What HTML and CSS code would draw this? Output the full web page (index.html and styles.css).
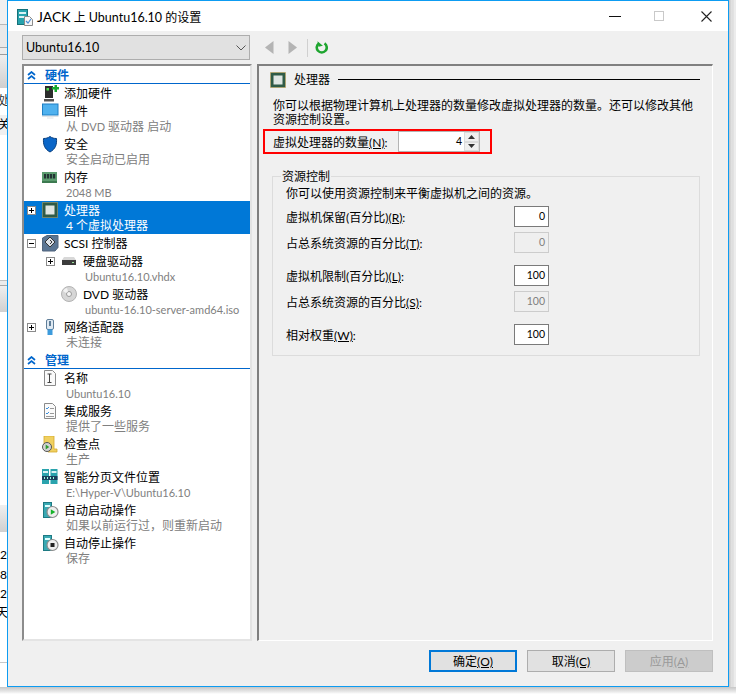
FILE: index.html
```html
<!DOCTYPE html>
<html lang="zh-CN">
<head>
<meta charset="utf-8">
<title>JACK 上 Ubuntu16.10 的设置</title>
<link rel="stylesheet" href="styles.css">
</head>
<body>
<div class="desktop">
  <div class="behind-left"></div>
  <div class="behind-right"></div>
  <div class="behind-bottom"></div>
  <span class="peek peek-1">处</span>
  <span class="peek peek-2">关</span>
  <span class="peek peek-3">20</span>
  <span class="peek peek-4">8</span>
  <span class="peek peek-5">2</span>
  <span class="peek peek-6">天</span>

  <div class="window">
    <header class="titlebar">
      <svg class="title-icon" width="16" height="17" viewBox="0 0 16 17"><rect x="0.500" y="0.500" width="10" height="15" fill="#27a3ad" stroke="#14717a"/><rect x="2" y="3" width="7" height="2" fill="#d8f2f4"/><rect x="2" y="7" width="7" height="2" fill="#d8f2f4"/><path d="M7.500 7.500h5l3 3v6h-8z" fill="#f6f6f6" stroke="#8b8b8b"/><path d="M9 12l2 2 3-4" fill="none" stroke="#4a90d9" stroke-width="1.200"/></svg>
      <span class="title-text"><span class="title-latin">JACK</span> 上 <span class="title-ver">Ubuntu16.10</span> 的设置</span>
      <div class="win-controls">
        <span class="win-min"></span>
        <span class="win-max"></span>
        <svg class="win-close" width="11" height="11" viewBox="0 0 11 11"><path d="M0.500 0.500l10 10M10.500 0.500l-10 10" stroke="#222" stroke-width="1.100"/></svg>
      </div>
    </header>

    <div class="content">
      <div class="top-row">
        <div class="combo">
          <span>Ubuntu16.10</span>
          <svg width="10" height="6" viewBox="0 0 10 6"><path d="M0.500 0.500L5 5l4.500-4.500" fill="none" stroke="#555" stroke-width="1"/></svg>
        </div>
        <div class="toolbar">
          <svg class="nav-arrow" width="9" height="13" viewBox="0 0 9 13"><path d="M8.500 0v13L0 6.500z" fill="#b4b4b4"/></svg>
          <svg class="nav-arrow" width="9" height="13" viewBox="0 0 9 13"><path d="M0.500 0v13L9 6.500z" fill="#b4b4b4"/></svg>
          <span class="tool-sep"></span>
          <svg width="13" height="13" viewBox="0 0 13 13"><path d="M4 2.300A5 5 0 1 0 9.500 2.300" fill="none" stroke="#1ea52f" stroke-width="2.600"/><path d="M3 0v5.500h4.500z" fill="#1ea52f" transform="rotate(-12 4 3)"/></svg>
        </div>
      </div>

      <div class="main-row">
        <nav class="tree">
          <div class="section"><svg class="chev" width="9" height="9" viewBox="0 0 9 9"><path d="M1 4l3.500-3L8 4M1 8l3.500-3L8 8" fill="none" stroke="#0066cc" stroke-width="1.700"/></svg><span>硬件</span></div>

          <div class="item single">
            <span class="exp"></span>
            <svg class="ico" width="17" height="17" viewBox="0 0 17 17"><path d="M3 1h8v12H3z" fill="#2c2c2c"/><path d="M2 14h10v2.500H2z" fill="#555"/><rect x="4.500" y="3" width="2.500" height="2.500" fill="#4ee04e"/><path d="M10 2h2.500V0h2.500v2h2v2.500h-2v2.500h-2.500V4.500H10z" fill="#17a92e"/></svg>
            <div class="lbl"><div class="main">添加硬件</div></div>
          </div>
          <div class="item">
            <span class="exp"></span>
            <svg class="ico" width="17" height="17" viewBox="0 0 17 17"><rect x="0.500" y="1" width="15.500" height="11" fill="#4fb1ee" stroke="#1f7fc4"/><path d="M0 13h16.500v1H0z" fill="#dfe3e6"/><path d="M5 14.500h6.500v1H5z" fill="#dfe3e6"/></svg>
            <div class="lbl"><div class="main">固件</div><div class="sub">从 <span class="latin">DVD</span> 驱动器 启动</div></div>
          </div>
          <div class="item">
            <span class="exp"></span>
            <svg class="ico" width="17" height="17" viewBox="0 0 17 17"><path d="M8 0.500c2 1.500 4 2 6.500 2 .5 6-1 10.500-6.500 13.500C2.500 13 1 8.500 1.500 2.500 4 2.500 6 2 8 0.500z" fill="#0a66c8" stroke="#073f7f"/></svg>
            <div class="lbl"><div class="main">安全</div><div class="sub">安全启动已启用</div></div>
          </div>
          <div class="item">
            <span class="exp"></span>
            <svg class="ico" width="17" height="17" viewBox="0 0 17 17"><rect x="0" y="3" width="15" height="9" fill="#5b9b6e"/><rect x="2" y="5" width="2.200" height="4.500" fill="#233"/><rect x="5" y="5" width="2.200" height="4.500" fill="#233"/><rect x="8" y="5" width="2.200" height="4.500" fill="#233"/><rect x="11" y="5" width="2.200" height="4.500" fill="#233"/><path d="M0 12h15v2H0z" fill="#3c7a50"/></svg>
            <div class="lbl"><div class="main">内存</div><div class="sub"><span class="latin">2048 MB</span></div></div>
          </div>
          <div class="item selected">
            <span class="exp"><span class="box plus"></span></span>
            <svg class="ico" width="17" height="17" viewBox="0 0 17 17"><rect x="0.500" y="0.500" width="15" height="15" fill="#2f5b46" stroke="#c8a24a" stroke-dasharray="1 1"/><rect x="3.500" y="3.500" width="9" height="9" fill="#dfe6e2"/></svg>
            <div class="lbl"><div class="main">处理器</div><div class="sub">4 个虚拟处理器</div></div>
          </div>
          <div class="item single">
            <span class="exp"><span class="box minus"></span></span>
            <svg class="ico" width="17" height="17" viewBox="0 0 17 17"><path d="M0.500 3L5 0.500h11v12l-3 3.500H0.500z" fill="#5a7593" stroke="#51657c"/><path d="M8 2l5 5-5 5-5-5z" fill="#dde3ea" stroke="#333"/><path d="M8 5l2 2-2 2" fill="none" stroke="#333"/></svg>
            <div class="lbl"><div class="main">SCSI 控制器</div></div>
          </div>
          <div class="item nested">
            <span class="exp"><span class="box plus"></span></span>
            <svg class="ico" width="17" height="17" viewBox="0 0 17 17"><path d="M1 7l2-3h10l2 3z" fill="#d8d8d8"/><rect x="1" y="7" width="14" height="5" fill="#3c3c3c"/><rect x="11" y="9" width="2" height="1" fill="#9be29b"/></svg>
            <div class="lbl"><div class="main">硬盘驱动器</div><div class="sub"><span class="latin">Ubuntu16.10.vhdx</span></div></div>
          </div>
          <div class="item nested">
            <span class="exp"></span>
            <svg class="ico" width="17" height="17" viewBox="0 0 17 17"><circle cx="8" cy="8" r="7.500" fill="#d6d6d6" stroke="#b3b3b3"/><circle cx="8" cy="8" r="2.500" fill="#f5f5f5" stroke="#9a9a9a"/><path d="M2 5a7 7 0 0 1 4-3l1 3.500-2 1.500z" fill="#f2f2f2"/></svg>
            <div class="lbl"><div class="main">DVD 驱动器</div><div class="sub"><span class="latin">ubuntu-16.10-server-amd64.iso</span></div></div>
          </div>
          <div class="item">
            <span class="exp"><span class="box plus"></span></span>
            <svg class="ico" width="17" height="17" viewBox="0 0 17 17"><rect x="4.500" y="0.500" width="7" height="10" rx="1.500" fill="#dfe9f2" stroke="#5f7e99"/><rect x="7" y="2" width="2" height="5" fill="#5f7e99"/><path d="M5.500 10.500h5V16h-5z" fill="#3d9bdc"/></svg>
            <div class="lbl"><div class="main">网络适配器</div><div class="sub">未连接</div></div>
          </div>

          <div class="section"><svg class="chev" width="9" height="9" viewBox="0 0 9 9"><path d="M1 4l3.500-3L8 4M1 8l3.500-3L8 8" fill="none" stroke="#0066cc" stroke-width="1.700"/></svg><span>管理</span></div>

          <div class="item">
            <span class="exp"></span>
            <svg class="ico" width="17" height="17" viewBox="0 0 17 17"><path d="M2.500 0.500h8l3 3v12h-11z" fill="#fafafa" stroke="#8a8a8a"/><path d="M5.500 4h4M5.500 12.500h4M7.500 4v8.500" fill="none" stroke="#444"/></svg>
            <div class="lbl"><div class="main">名称</div><div class="sub"><span class="latin">Ubuntu16.10</span></div></div>
          </div>
          <div class="item">
            <span class="exp"></span>
            <svg class="ico" width="17" height="17" viewBox="0 0 17 17"><path d="M2.500 0.500h8l3 3v12h-11z" fill="#fafafa" stroke="#8a8a8a"/><path d="M4 5l1 1 2-2M4 10l1 1 2-2" fill="none" stroke="#3b8edb"/><path d="M8 5.500h4M8 10.500h4M4 13.500h8" stroke="#999"/></svg>
            <div class="lbl"><div class="main">集成服务</div><div class="sub">提供了一些服务</div></div>
          </div>
          <div class="item">
            <span class="exp"></span>
            <svg class="ico" width="17" height="17" viewBox="0 0 17 17"><path d="M2 0h10v13h3v3H6V9H2z" fill="#f0d060" stroke="#d4a92e" stroke-width="0.800"/><circle cx="5" cy="11" r="4.500" fill="#d4d4d4" stroke="#555"/><path d="M3.700 8.500l3.500 2.500-3.500 2.500z" fill="#2f9c2f"/></svg>
            <div class="lbl"><div class="main">检查点</div><div class="sub">生产</div></div>
          </div>
          <div class="item">
            <span class="exp"></span>
            <svg class="ico" width="17" height="17" viewBox="0 0 17 17"><rect x="0" y="0" width="7" height="15" fill="#2aa3ad"/><rect x="8.500" y="0" width="7" height="15" fill="#2aa3ad"/><rect x="1" y="2" width="5" height="2" fill="#d8f2f4"/><rect x="9.500" y="2" width="5" height="2" fill="#d8f2f4"/><rect x="0" y="7" width="15.500" height="4" fill="#1b3f5c"/><path d="M2 8h1v2H2zM5 8h1v2H5zM8 8h1v2H8zM11 8h1v2h-1z" fill="#9fd"/></svg>
            <div class="lbl"><div class="main">智能分页文件位置</div><div class="sub"><span class="latin">E:\Hyper-V\Ubuntu16.10</span></div></div>
          </div>
          <div class="item">
            <span class="exp"></span>
            <svg class="ico" width="17" height="17" viewBox="0 0 17 17"><rect x="1.500" y="0.500" width="8" height="15" fill="#39a9b3" stroke="#1d7a83"/><rect x="3" y="3" width="5" height="2" fill="#dff"/><circle cx="10.500" cy="10" r="5.500" fill="#efefef" stroke="#8c8c8c" stroke-width="1.200"/><path d="M8.800 7.200l4.500 2.800-4.500 2.800z" fill="#17b32a"/></svg>
            <div class="lbl"><div class="main">自动启动操作</div><div class="sub">如果以前运行过，则重新启动</div></div>
          </div>
          <div class="item">
            <span class="exp"></span>
            <svg class="ico" width="17" height="17" viewBox="0 0 17 17"><rect x="1.500" y="0.500" width="8" height="15" fill="#39a9b3" stroke="#1d7a83"/><rect x="3" y="3" width="5" height="2" fill="#dff"/><circle cx="10.500" cy="10" r="5.500" fill="#efefef" stroke="#8c8c8c" stroke-width="1.200"/><rect x="8.500" y="8" width="4" height="4" fill="#222"/></svg>
            <div class="lbl"><div class="main">自动停止操作</div><div class="sub">保存</div></div>
          </div>
        </nav>

        <section class="panel">
          <div class="panel-head">
            <svg class="panel-ico" width="16" height="16" viewBox="0 0 16 16"><rect x="0.500" y="0.500" width="15" height="15" fill="#2f5b46" stroke="#c8a24a" stroke-dasharray="1 1"/><rect x="3.500" y="3.500" width="9" height="9" fill="#dfe6e2"/></svg>
            <span class="panel-title">处理器</span>
            <span class="panel-rule"></span>
          </div>
          <p class="panel-desc">你可以根据物理计算机上处理器的数量修改虚拟处理器的数量。还可以修改其他资源控制设置。</p>
          <div class="cpu-row">
            <label class="cpu-label">虚拟处理器的数量<u>(N)</u>:</label>
            <div class="spin">
              <span class="spin-value">4</span>
              <span class="spin-btns">
                <span class="spin-btn"><svg width="7" height="4" viewBox="0 0 7 4"><path d="M3.500 0L7 4H0z" fill="#333"/></svg></span>
                <span class="spin-btn"><svg width="7" height="4" viewBox="0 0 7 4"><path d="M3.500 4L7 0H0z" fill="#333"/></svg></span>
              </span>
            </div>
          </div>

          <div class="group">
            <span class="legend">资源控制</span>
            <p class="group-desc">你可以使用资源控制来平衡虚拟机之间的资源。</p>
            <div class="field"><label>虚拟机保留(百分比)<u>(R)</u>:</label><span class="num">0</span></div>
            <div class="field"><label>占总系统资源的百分比<u>(T)</u>:</label><span class="num off">0</span></div>
            <div class="field spaced"><label>虚拟机限制(百分比)<u>(L)</u>:</label><span class="num">100</span></div>
            <div class="field"><label>占总系统资源的百分比<u>(S)</u>:</label><span class="num off">100</span></div>
            <div class="field spaced"><label>相对权重<u>(W)</u>:</label><span class="num">100</span></div>
          </div>
        </section>
      </div>

      <footer class="buttons">
        <button class="btn primary">确定<u>(O)</u></button>
        <button class="btn">取消<u>(C)</u></button>
        <button class="btn disabled">应用<u>(A)</u></button>
      </footer>
    </div>
  </div>
</div>
</body>
</html>
```

FILE: styles.css
```css
* { box-sizing: border-box; }
html, body { margin: 0; padding: 0; }
body {
  font-family: "Lato", "Noto Sans CJK SC", sans-serif;
  font-size: 12px;
  color: #000;
}
p { margin: 0; }

.desktop {
  position: relative;
  width: 736px;
  height: 694px;
  overflow: hidden;
  background: #fff;
}
.behind-left {
  position: absolute;
  left: 0; top: 0;
  width: 7px; height: 694px;
  background: linear-gradient(to bottom,
    #f0f0f0 0 24px, #b8b8b8 24px 25px, #e9e9e9 25px 47px, #aaa 47px 48px,
    #ececec 48px 54px, #9c9c9c 54px 55px, #efefef 55px, #cfcfcf 88px,
    #fff 88px 115px, #f0f0f0 115px 135px, #fff 135px 280px, #c0c0c0 280px 281px,
    #ececec 281px 285px, #a8a8a8 285px 286px, #efefef 286px, #d0d0d0 312px,
    #fff 312px 505px, #efefef 505px, #d0d0d0 532px, #fff 532px 662px,
    #c8c8c8 662px 663px, #fff 663px 694px);
}
.behind-right {
  position: absolute;
  left: 729px; top: 0;
  width: 7px; height: 694px;
  background: linear-gradient(to right, #c4c4c4, #e6e6e6 3px, #d8d8d8 4px, #ececec 5px);
}
.behind-bottom {
  position: absolute;
  left: 0; top: 687px;
  width: 736px; height: 7px;
  background: linear-gradient(to bottom, #c6c6c6, #ececec 5px, #fff);
}
.peek {
  position: absolute;
  left: -2px;
  line-height: 16px;
}
.peek-1 { top: 93px; color: #333; }
.peek-2 { top: 117px; }
.peek-3 { top: 547px; left: 0; }
.peek-4 { top: 567px; left: 0; }
.peek-5 { top: 586px; left: 0; }
.peek-6 { top: 605px; left: -4px; }

.window {
  position: absolute;
  left: 7px; top: 0;
  width: 722px; height: 687px;
  border: 1px solid #0d9cf2;
  background: #f0f0f0;
  display: flex;
  flex-direction: column;
}

.titlebar {
  height: 30px;
  flex: none;
  background: #fff;
  display: flex;
  align-items: center;
  padding-left: 9px;
}
.title-icon { flex: none; margin-top: 2px; }
.title-text { margin-left: 4px; font-size: 12px; margin-top: 1px; white-space: pre; }
.title-latin { font-size: 14px; }
.title-ver { font-size: 12.500px; }
.win-controls {
  margin-left: auto;
  display: flex;
  align-items: center;
  padding-right: 16px;
}
.win-min { width: 12px; height: 1px; background: #111; margin-right: 33px; }
.win-max { width: 10px; height: 10px; border: 1px solid #c9c9c9; margin-right: 37px; }
.win-close { display: block; }

.content {
  flex: 1;
  display: flex;
  flex-direction: column;
  padding: 4px 15px 0 14px;
  min-height: 0;
}
.top-row {
  display: flex;
  height: 25px;
  flex: none;
}
.combo {
  width: 228px;
  height: 25px;
  border: 1px solid #adadad;
  background: #e1e1e1;
  display: flex;
  align-items: center;
  justify-content: space-between;
  padding: 0 3px;
  font-size: 12.500px;
}
.toolbar {
  display: flex;
  align-items: center;
  margin-left: 15px;
}
.nav-arrow { margin-right: 14px; }
.tool-sep { width: 1px; height: 18px; background: #d0d0d0; margin: 0 7px 0 -4px; }

.main-row {
  display: flex;
  margin-top: 4px;
  height: 577px;
  flex: none;
  gap: 5px;
}
.tree {
  width: 230px;
  border: 2px solid;
  border-color: #8c8c8c #e4e4e4 #e4e4e4 #8c8c8c;
  background: #fff;
  flex: none;
}
.section {
  height: 18px;
  display: flex;
  align-items: center;
  border-bottom: 1px solid #0066cc;
  color: #0066cc;
  font-weight: 700;
  font-size: 12px;
  padding: 1px 0 0 3px;
}
.chev { flex: none; margin-right: 9px; }
.section span { line-height: 15px; }

.item {
  height: 33px;
  display: flex;
  padding-top: 2px;
  line-height: 15px;
}
.item.single { height: 18px; }
.item.nested { padding-left: 19px; }
.exp {
  flex: none;
  width: 18px;
  padding: 3px 0 0 3px;
}
.box {
  display: block;
  width: 9px; height: 9px;
  border: 1px solid #8a8a8a;
  background: #fff;
  position: relative;
}
.box::before {
  content: "";
  position: absolute;
  left: 1px; top: 3px;
  width: 5px; height: 1px;
  background: #000;
}
.plus::after {
  content: "";
  position: absolute;
  left: 3px; top: 1px;
  width: 1px; height: 5px;
  background: #000;
}
.ico { flex: none; width: 17px; height: 17px; margin: -1px 5px 0 0; }
.lbl { min-width: 0; white-space: nowrap; }
.sub { color: #808080; padding-left: 2px; }
.latin { font-size: 11px; }
.selected { background: #0078d7; color: #fff; }
.selected .sub { color: #fff; }

.panel {
  width: 456px;
  flex: none;
  border: 2px solid;
  border-color: #808080 #fff #fff #808080;
  border-right-width: 1px;
  border-bottom-width: 1px;
  padding: 5px 12px 0 14px;
}
.panel-head {
  display: flex;
  align-items: center;
  height: 17px;
}
.panel-ico { flex: none; margin-left: -3px; }
.panel-title { margin-left: 8px; line-height: 15px; }
.panel-rule { flex: 1; height: 1px; background: #000; margin-left: 8px; }
.panel-desc {
  margin-top: 11px;
  width: 424px;
  line-height: 14px;
}
.cpu-row {
  display: flex;
  align-items: center;
  margin: 2px 0 0 -10px;
  width: 229px;
  height: 25px;
  border: 2px solid #f00;
  padding-left: 8px;
}
.cpu-label { width: 125px; flex: none; white-space: nowrap; }
.spin {
  width: 82px;
  height: 21px;
  border: 1px solid #b4b4b4;
  background: #fff;
  display: flex;
  justify-content: flex-end;
}
.spin-value { line-height: 18px; margin-right: 2px; font-size: 10.500px; }
.spin-btns { width: 15px; display: flex; flex-direction: column; flex: none; }
.spin-btn {
  flex: 1;
  background: #f0f0f0;
  border: 1px solid #dcdcdc;
  display: flex;
  align-items: center;
  justify-content: center;
}

.group {
  position: relative;
  margin: 22px 0 0 -1px;
  width: 428px;
  height: 180px;
  border: 1px solid #dcdcdc;
  padding: 9px 0 0 13px;
}
.legend {
  position: absolute;
  left: 8px; top: -8px;
  background: #f0f0f0;
  padding: 0 1px;
  line-height: 15px;
}
.group-desc { line-height: 15px; }
.field {
  display: flex;
  justify-content: space-between;
  align-items: center;
  width: 263px;
  height: 21px;
  margin-top: 5px;
}
.field.spaced { margin-top: 12px; }
.num {
  width: 35px;
  height: 21px;
  border: 1px solid #7a7a7a;
  background: #fff;
  text-align: right;
  padding-right: 3px;
  line-height: 18px;
  font-size: 10.500px;
}
.num.off {
  border-color: #ccc;
  background: #efefef;
  color: #808080;
}

.buttons {
  display: flex;
  justify-content: flex-end;
  gap: 10px;
  margin-top: 9px;
}
.btn {
  width: 88px;
  height: 22px;
  border: 1px solid #adadad;
  background: #e1e1e1;
  font: inherit;
  line-height: 15px;
  padding: 0;
  color: #000;
}
.btn.primary { border: 2px solid #0078d7; }
.btn.disabled { background: #ccc; border-color: #bfbfbf; color: #9a9a9a; }
```
